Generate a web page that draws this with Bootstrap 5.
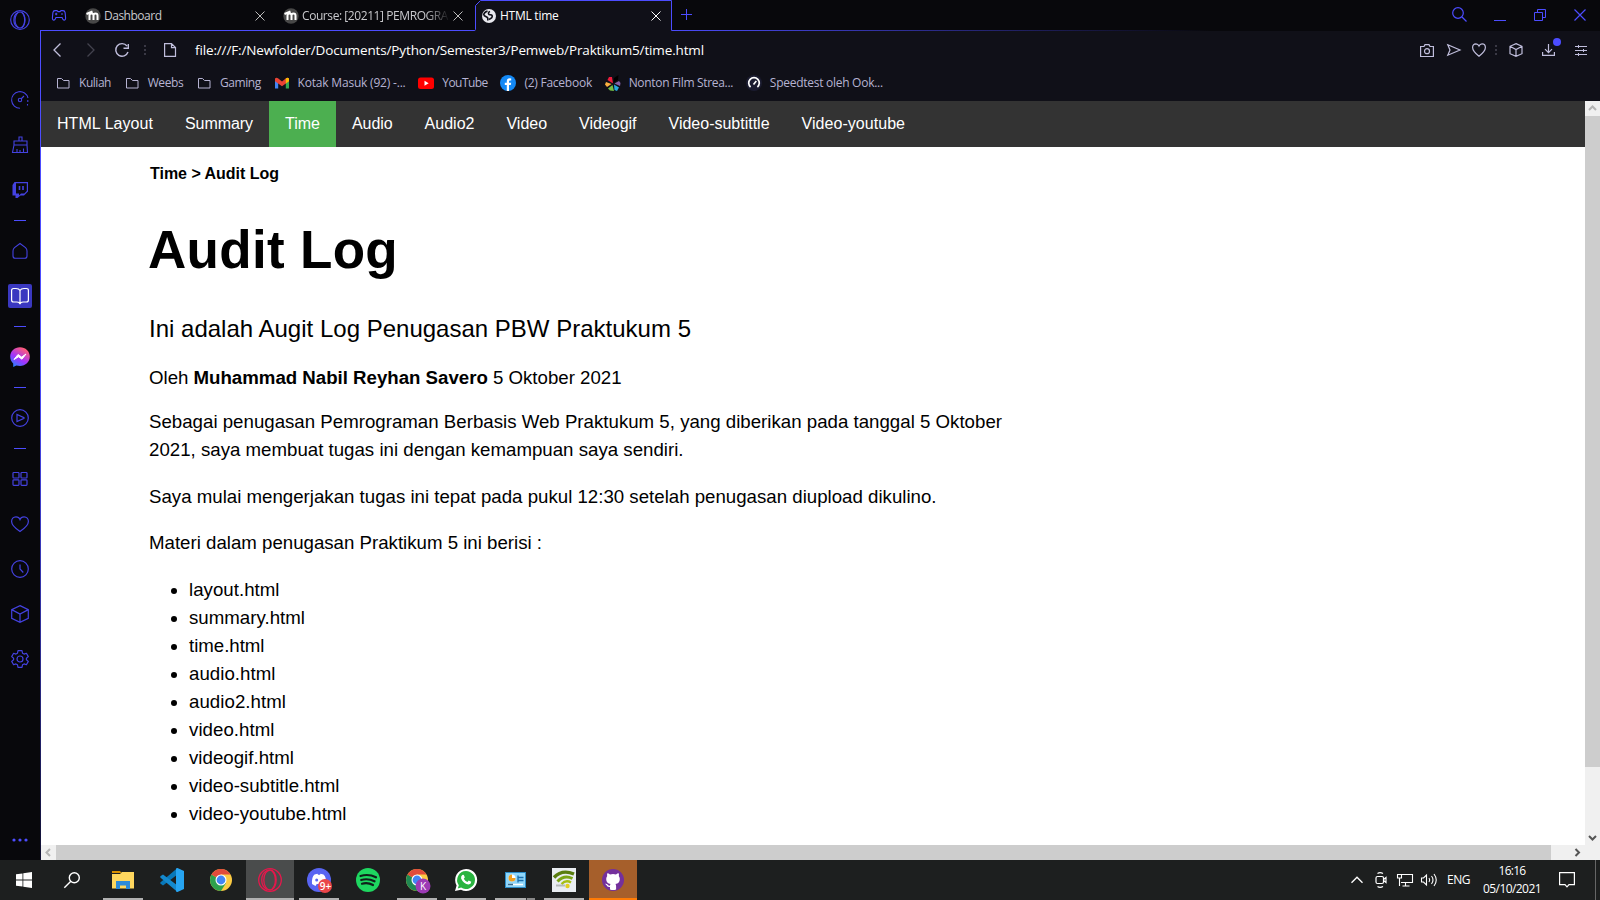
<!DOCTYPE html>
<html lang="id">
<head>
<meta charset="utf-8">
<title>HTML time</title>
<link href="https://cdn.jsdelivr.net/npm/bootstrap@5.3.0/dist/css/bootstrap.min.css" rel="stylesheet">
<style>
:root{--neon:#4c4cff;--chrome:#101018;--dark:#08080c}
body{width:1600px;height:900px;overflow:hidden;background:var(--dark);font-family:"Open Sans","Noto Sans",sans-serif;font-size:12px;line-height:16px;color:#c5c3dc}
svg{display:block;flex:none;overflow:visible}
svg.ln{fill:none;stroke:currentColor}
[data-w]{white-space:nowrap;flex:none}
.browser{height:860px}
.side{width:40px;color:#4442e0}
.side .opera-menu{height:77px;padding-top:10px}
.cell{height:45px;flex:none;padding-right:1px}
.dash{height:16px;flex:none}
.dash i{width:12px;height:1px;background:var(--neon)}
.picked{width:24px;height:24px;background:#3a38c0;border-radius:2px;color:#fff;margin-right:-1px}
.more{margin-top:auto;margin-bottom:18px}
.edge{width:1px;margin-top:30px;background:linear-gradient(var(--neon) 40%,#2d2d90 75%,#101030)}
.tabs{height:31px;background:linear-gradient(90deg,var(--neon) 40%,transparent 75%) 0 30px/100% 1px no-repeat;margin-left:-1px}
.tab{width:198px;height:31px;padding-left:9px}
.tab .fav{width:16px}
.tab .ttl{width:151px;overflow:hidden;margin-left:3px;color:#c8c8cc}
.tab.on{width:197px;position:relative;margin-left:-1px}
.tab.on .ttl{color:#fff;width:151px}
.tab.on .outline{position:absolute;left:0;top:0}
.tab.on>*{position:relative}
.fade-end{-webkit-mask:linear-gradient(90deg,#000 82%,transparent 98%)}
.addr{height:38px;background:var(--chrome);color:#c0bedc}
.addr .url{font-size:13.5px;color:#fff}
.marks{height:32px;background:var(--chrome);padding:0 0 5px 14px;gap:12.7px;color:#b6b3d2}
.marks>span{gap:8px}
.marks .ic{width:16px}
.view{height:759px;background:#fff;color:#000;font-family:"Liberation Sans",Arial,sans-serif}
.doc{height:744px;overflow:hidden}
.topnav{height:46px;background:#333;font-size:16px}
.topnav a{color:#fff;padding:0 16px;height:46px;line-height:45px;text-decoration:none}
.topnav a.active{background:#4caf50;color:#fff}
.article{padding-left:108px;font-size:18.67px;line-height:28px}
.article p{margin:0 0 18.67px}
.article .crumb{font-size:16px;line-height:18px;font-weight:700;margin:18px 0 0 1px}
.article h1{font-size:53px;line-height:60px;font-weight:700;margin:37px 0 0 -1px}
.article .sub{font-size:24px;line-height:28px;margin:35px 0 0}
.article .by{margin:21px 0 16px}
.article ul{padding-left:40px;margin:0}
.vbar,.hbar{background:#f0f0f0;flex:none}
.vbar{width:15px;height:744px}
.hbar{height:15px}
.vbar i,.hbar i{background:#cdcdcd}
.arrow{width:15px;height:15px;flex:none}
.taskbar{height:40px;background:#1d1f1f;color:#fff}
.task{width:49px;height:40px;position:relative}
.task .bar{position:absolute;bottom:0;left:4.5px;width:40px;height:2px;background:#b1b1b1}
.task.big .bar{left:.5px;width:48px}
.task .wash{position:absolute;left:.5px;top:0;width:48px;height:40px}
.task svg{position:relative}
.w48{width:48px}
.clock{width:60px;line-height:18px;font-size:12px}
</style>
</head>
<body>
<div class="browser d-flex">
  <aside class="side d-flex flex-column align-items-center flex-shrink-0">
    <div class="opera-menu"><svg class="ln" width="20" height="20" stroke-width="1.2"><circle cx="10" cy="10" r="9.3"/><ellipse cx="10" cy="10" rx="5" ry="8"/><path d="M8 2.6C2.5 5 2.5 15 8 17.400M12 2.600C15.500 5 15.500 15 12 17.400"/></svg></div>
    <div class="cell d-flex align-items-center"><svg class="ln" width="18" height="18" stroke-width="1.1"><path d="M9 17.200A8.300 8.300 0 1 1 17 7M16.800 9v2M16.500 13v1.500M10 8l3-3"/><circle cx="9" cy="9" r="1.700"/></svg></div>
    <div class="cell d-flex align-items-center"><svg class="ln" width="18" height="18" stroke-width="1.1"><path d="M8 5V1h3v4M3 5h13v4H3zM3 9L1.500 16.500h15L16 9M6 13v3M9 14v2M12.500 12.500v4"/></svg></div>
    <div class="cell d-flex align-items-center"><svg width="18" height="18"><path d="M3.500 1H17v9.500l-4 4H9.500L6.500 17H4.500v-2.500H1.500V4z" fill="currentColor"/><path d="M5 2.200h10.800V10l-2.500 2.600H10l-2 1.800v-1.800H5z" fill="#08080c"/><path d="M8.500 5v4M12 5v4" stroke="currentColor" stroke-width="1.600"/></svg></div>
    <div class="dash d-flex align-items-center"><i></i></div>
    <div class="cell d-flex align-items-center"><svg class="ln" width="18" height="18" stroke-width="1.100"><path d="M9 1.500L14.500 5.600Q16 7 16 9v5q0 2.300-2.300 2.300H4.300Q2 16.300 2 14V9q0-2 1.500-3.400z"/></svg></div>
    <div class="cell d-flex align-items-center"><div class="picked d-flex align-items-center justify-content-center"><svg class="ln" width="18" height="18" stroke-width="1.200"><path d="M9 3.500Q8 1.500 5 1.500H2.500Q.6 1.500.6 3.500V13q0 2 2 2H6q2.500 0 3 2 .5-2 3-2h3.400q2 0 2-2V3.500q0-2-2-2H13Q10 1.500 9 3.500zV17"/></svg></div></div>
    <div class="dash d-flex align-items-center"><i></i></div>
    <div class="cell d-flex align-items-center"><svg width="20" height="20"><defs><linearGradient id="msg" x1="0" y1="1" x2=".6" y2="0"><stop offset="0" stop-color="#0a95ff"/><stop offset=".5" stop-color="#a033ff"/><stop offset="1" stop-color="#ff5c78"/></linearGradient></defs><path d="M10 .2C4.400.2.200 4.200.200 9.600c0 2.900 1.200 5.300 3 7V20l3.200-1.500c1.100.3 2.300.5 3.600.5 5.600 0 9.800-4 9.800-9.400S15.600.2 10 .2z" fill="url(#msg)"/><path d="M4 12.500L8 7.500l3.600 2.600L16 7l-4 5.200L8.500 9.800z" fill="#fff" stroke="#fff"/></svg></div>
    <div class="dash d-flex align-items-center"><i></i></div>
    <div class="cell d-flex align-items-center"><svg class="ln" width="18" height="18" stroke-width="1.200"><circle cx="9" cy="9" r="8.300"/><path d="M6 5.500v7l7-3.200v-.6z"/></svg></div>
    <div class="dash d-flex align-items-center"><i></i></div>
    <div class="cell d-flex align-items-center"><svg class="ln" width="18" height="18" stroke-width="1.200"><rect x="2" y="2.500" width="6" height="5.500" rx=".8"/><rect x="10" y="2.500" width="6" height="5.500" rx=".8"/><rect x="2" y="9.800" width="6" height="5.500" rx=".8"/><rect x="10" y="9.800" width="6" height="5.500" rx=".8"/></svg></div>
    <div class="cell d-flex align-items-center"><svg class="ln" width="18" height="18" stroke-width="1.200"><path d="M9 4.500Q8 1.800 5 1.800C2.300 1.800.6 4 .6 6.500c0 4 3.400 6.600 8.400 10 5-3.400 8.400-6 8.400-10 0-2.500-1.700-4.700-4.400-4.700Q10 1.800 9 4.500z"/></svg></div>
    <div class="cell d-flex align-items-center"><svg class="ln" width="18" height="18" stroke-width="1.200"><circle cx="9" cy="9" r="8.300"/><path d="M9 4.500V9l3.300 3.500"/></svg></div>
    <div class="cell d-flex align-items-center"><svg class="ln" width="18" height="18" stroke-width="1.200"><path d="M9 .6l8.300 4v8.800L9 17.400l-8.300-4V4.600zM.7 4.600L9 9l8.300-4.400M9 9v8.400"/></svg></div>
    <div class="cell d-flex align-items-center"><svg class="ln" width="18" height="18" stroke-width="1.200" stroke-linejoin="round"><circle cx="9" cy="9" r="3"/><path d="M7 .7h4l.5 2.500 1.600.9 2.300-.8 1.900 3.300L15.400 8.200v1.600l1.900 1.600-1.900 3.300-2.300-.8-1.600.9-.5 2.500H7l-.5-2.500-1.600-.9-2.300.8L.7 11.400l1.900-1.600V8.200L.7 6.600l1.900-3.300 2.300.8 1.600-.9z"/></svg></div>
    <div class="more"><svg width="18" height="4" fill="#4c4cff"><circle cx="3" cy="2" r="1.600"/><circle cx="9" cy="2" r="1.600"/><circle cx="15" cy="2" r="1.600"/></svg></div>
  </aside>
  <div class="edge flex-shrink-0"></div>
  <main class="flex-grow-1 d-flex flex-column">
    <header class="tabs d-flex">
      <div class="d-flex align-items-center" style="width:36px;padding-left:12px;color:var(--neon)"><svg class="ln" width="14" height="11" stroke-width="1.100"><path d="M3 .6h2l1 1h2l1-1h2q1.800 0 2.100 2l.5 5q.2 2.500-1.600 2.500-1 0-2-2.600H4Q3 10.100 2 10.100.200 10.100.400 7.600l.5-5Q1.200.600 3 .600z"/><path d="M3 4h2.400M4.200 2.800v2.400M9 4h2"/></svg></div>
      <div class="tab d-flex align-items-center">
        <svg class="fav" width="16" height="16"><circle cx="8" cy="8" r="7.700" fill="#484848"/><path d="M4.500 12V7.500q0-2 2-2t2 2V12M8.500 7.500q0-2 2-2t2 2V12M1.500 6l6-2.500" fill="none" stroke="#fff" stroke-width="2"/></svg>
        <div class="ttl"><span data-w="57.500">Dashboard</span></div>
        <svg class="ln" width="10" height="10" style="color:#bbb"><path d="M.5.500l9 9M9.500.500l-9 9"/></svg>
      </div>
      <div class="tab d-flex align-items-center">
        <svg class="fav" width="16" height="16"><circle cx="8" cy="8" r="7.700" fill="#484848"/><path d="M4.500 12V7.500q0-2 2-2t2 2V12M8.500 7.500q0-2 2-2t2 2V12M1.500 6l6-2.500" fill="none" stroke="#fff" stroke-width="2"/></svg>
        <div class="ttl fade-end"><span data-w="146">Course: [20211] PEMROGRA</span></div>
        <svg class="ln" width="10" height="10" style="color:#bbb"><path d="M.5.500l9 9M9.500.500l-9 9"/></svg>
      </div>
      <div class="tab on d-flex align-items-center">
        <svg class="outline" width="202" height="31"><path d="M0 31V30.500H4.500V5.500L9.500.5H200.500V31z" fill="#101018"/><path d="M0 30.500H3.500L4.500 29.500V5.500L9.500.5H200.500V30.500" fill="none" stroke="#4c4cff"/></svg>
        <svg class="fav" width="16" height="16" style="margin-left:1px"><circle cx="8" cy="8" r="7" fill="#e9e9ef"/><path d="M2.500 7.500Q3 4 6.500 3M9 3.500Q6.500 4.500 8 6.500L10.500 7q1.500 1 0 3L8 11.500M3 7.500l3.500 2 .5 3" fill="none" stroke="#101018" stroke-width="1.600"/></svg>
        <div class="ttl"><span data-w="58.500">HTML time</span></div>
        <svg class="ln" width="10" height="10" style="color:#fff"><path d="M.5.500l9 9M9.500.500l-9 9"/></svg>
      </div>
      <div class="d-flex flex-grow-1 align-items-center pb-1 pe-3" style="color:var(--neon)">
        <svg class="ln" width="11" height="11" style="margin:2px 0 0 13px"><path d="M5.500 0v11M0 5.500h11"/></svg>
        <svg class="ln ms-auto" width="15" height="15" style="margin-top:1px" stroke-width="1.200"><circle cx="6" cy="6" r="5.300"/><path d="M10 10l4.500 4.500"/></svg>
        <svg class="ln" width="12" height="12" style="margin:10px 0 0 27px"><path d="M0 7.500h12"/></svg>
        <svg class="ln" width="12" height="12" style="margin:3px 0 0 28px"><path d="M.5 3.500h8v8h-8zM3.500 3V.5h8v8H9"/></svg>
        <svg class="ln" width="12" height="12" style="margin:3px -2px 0 28px" stroke-width="1.200"><path d="M.5.500l11 11M11.500.500l-11 11"/></svg>
      </div>
    </header>
    <div class="addr d-flex align-items-center">
      <svg class="ln" width="8" height="14" style="margin-left:12px" stroke-width="1.300"><path d="M7.500.500L1 7l6.500 6.500"/></svg>
      <svg class="ln" width="8" height="14" style="margin-left:26px;color:#43424e" stroke-width="1.300"><path d="M.5.500L7 7 .5 13.500"/></svg>
      <svg class="ln" width="14" height="14" style="margin-left:20px" stroke-width="1.400"><path d="M12 3A6.300 6.300 0 1 0 13 9M13.300 1v4.300H8.500"/></svg>
      <svg width="2" height="10" style="margin-left:15px" fill="#3a3945"><path d="M0 0h2v2H0zM0 4h2v2H0zM0 8h2v2H0z"/></svg>
      <svg class="ln" width="12" height="14" style="margin-left:18px" stroke-width="1.200"><path d="M.6.600h6.900l4 4v8.800H.600zM7.500.600v4h4"/></svg>
      <span class="url" style="margin-left:19px" data-w="509">file:///F:/Newfolder/Documents/Python/Semester3/Pemweb/Praktikum5/time.html</span>
      <div class="ms-auto d-flex align-items-center" style="padding-right:13px">
        <svg class="ln" width="14" height="13" stroke-width="1.200"><path d="M.6 2.500H4L5 .6h4l1 1.900h3.400v10H.600z"/><circle cx="7" cy="7.200" r="2.500"/></svg>
        <svg class="ln" width="14" height="12" style="margin-left:13px" stroke-width="1.200"><path d="M.8.800L13 6 .800 11.200 3 6z"/></svg>
        <svg class="ln" width="14" height="14" style="margin-left:11px" stroke-width="1.200"><path d="M7 3Q6 .8 4 .8 .6 1 .6 4.500C.6 8 3.500 10.500 7 13.300c3.500-2.800 6.400-5.300 6.400-8.800C13.400 1 10.500.800 10 .800 8 .800 7 3 7 3z"/></svg>
        <svg width="2" height="10" style="margin-left:9px" fill="#3a3945"><path d="M0 0h2v2H0zM0 4h2v2H0zM0 8h2v2H0z"/></svg>
        <svg class="ln" width="14" height="14" style="margin-left:12px" stroke-width="1.200"><path d="M7 .6l6 2.700v7.400l-6 2.700-6-2.700V3.300zM1 3.300L7 6.500l6-3.200M7 6.500v7"/></svg>
        <svg class="ln" width="13" height="12" style="margin-left:19px" stroke-width="1.200"><path d="M6.500 0v8.500M3 5.200l3.500 3.500L10 5.200M.6 8v3.400h11.800V8"/><circle cx="15" cy="-2" r="4" fill="#4c4cff" stroke="none"/></svg>
        <svg class="ln" width="12" height="11" style="margin-left:20px"><path d="M0 1.500h12M0 5.500h12M0 9.500h12M3.500 0v3M8.500 4v3M3.500 8v3"/></svg>
      </div>
    </div>
    <div class="marks d-flex align-items-center">
      <span class="d-flex align-items-center"><svg class="ln ic" width="16" height="12"><path d="M2.500 1.500h4l2 2h5.500v7.500H2.500z"/></svg><span data-w="32">Kuliah</span></span>
      <span class="d-flex align-items-center"><svg class="ln ic" width="16" height="12"><path d="M2.500 1.500h4l2 2h5.500v7.500H2.500z"/></svg><span data-w="35.500">Weebs</span></span>
      <span class="d-flex align-items-center"><svg class="ln ic" width="16" height="12"><path d="M2.500 1.500h4l2 2h5.500v7.500H2.500z"/></svg><span data-w="41">Gaming</span></span>
      <span class="d-flex align-items-center"><svg class="ic" width="16" height="12"><path d="M1 2v9.500h3.200V5z" fill="#4285f4"/><path d="M15 2v9.500h-3.200V5z" fill="#34a853"/><path d="M1 1.500v2.700L8 9.300l7-5.100V1.500Q13.500 0 12 1.300L8 4.500 4 1.300Q2.500 0 1 1.500z" fill="#ea4335"/><path d="M11.800 1.500v5L15 4.200V1.500Q13.500 0 11.800 1.500z" fill="#fbbc04"/></svg><span data-w="108">Kotak Masuk (92) -...</span></span>
      <span class="d-flex align-items-center"><svg class="ic" width="16" height="12"><rect y=".5" width="16" height="11.500" rx="2.500" fill="red"/><path d="M6.500 3.700v5l4.200-2.500z" fill="#fff"/></svg><span data-w="45.500">YouTube</span></span>
      <span class="d-flex align-items-center"><svg class="ic" width="16" height="16"><circle cx="8" cy="8" r="8" fill="#1489f5"/><path d="M6.800 16V10H4.800V7.700h2V6.200q0-2.900 2.900-2.900l1.500.1v2H10q-1 0-1 1v1.300h2.200L10.800 10H9v6z" fill="#fff"/></svg><span data-w="67.500">(2) Facebook</span></span>
      <span class="d-flex align-items-center"><svg class="ic" width="16" height="16"><path d="M8 8.500L2.500 5 4 2h3z" fill="#ed1c3c"/><path d="M8.500 8L9 3l4.500-3L13 5z" fill="#000"/><path d="M9.500 8.500L14 6l1.500 2-.5 3z" fill="#8560a8"/><path d="M9 9.500l5 3-2 3.500-2.500-1z" fill="#27aae1"/><path d="M7.500 10l1.500 6-4-.5-2-2z" fill="#74bf44"/><path d="M6.500 9L2 12 0 9.500 1 7z" fill="#fbb040"/><circle cx="8" cy="9" r="1" fill="#101018"/></svg><span data-w="104.500">Nonton Film Strea...</span></span>
      <span class="d-flex align-items-center"><svg class="ic" width="16" height="16"><circle cx="8" cy="8" r="8" fill="#1b1c30"/><path d="M4.600 12A5.300 5.300 0 1 1 11.400 12M7.500 9.500l2.800-3.500" fill="none" stroke="#fff" stroke-width="1.700"/></svg><span data-w="113">Speedtest oleh Ook...</span></span>
    </div>
    <section class="view">
      <div class="d-flex">
        <div class="doc flex-grow-1">
          <nav class="topnav d-flex">
            <a href="#" data-w="128">HTML Layout</a><a href="#" data-w="100">Summary</a><a href="#" class="active" data-w="67">Time</a><a href="#" data-w="72.500">Audio</a><a href="#" data-w="82">Audio2</a><a href="#" data-w="72.500">Video</a><a href="#" data-w="89.500">Videogif</a><a href="#" data-w="133">Video-subtittle</a><a href="#" data-w="135.500">Video-youtube</a>
          </nav>
          <article class="article">
            <p class="crumb"><span data-w="129">Time &gt; Audit Log</span></p>
            <h1><span data-w="250">Audit Log</span></h1>
            <p class="sub"><span data-w="542">Ini adalah Augit Log Penugasan PBW Praktukum 5</span></p>
            <p class="by"><span data-w="472.500">Oleh <b>Muhammad Nabil Reyhan Savero</b> 5 Oktober 2021</span></p>
            <p><span data-w="853">Sebagai penugasan Pemrograman Berbasis Web Praktukum 5, yang diberikan pada tanggal 5 Oktober</span><br><span data-w="534.500">2021, saya membuat tugas ini dengan kemampuan saya sendiri.</span></p>
            <p><span data-w="787.500">Saya mulai mengerjakan tugas ini tepat pada pukul 12:30 setelah penugasan diupload dikulino.</span></p>
            <p><span data-w="393">Materi dalam penugasan Praktikum 5 ini berisi :</span></p>
            <ul>
              <li><span data-w="90.500">layout.html</span></li>
              <li><span data-w="116">summary.html</span></li>
              <li><span data-w="75.500">time.html</span></li>
              <li><span data-w="86.500">audio.html</span></li>
              <li><span data-w="97">audio2.html</span></li>
              <li><span data-w="85.500">video.html</span></li>
              <li><span data-w="105">videogif.html</span></li>
              <li><span data-w="150.500">video-subtitle.html</span></li>
              <li><span data-w="157.500">video-youtube.html</span></li>
            </ul>
          </article>
        </div>
        <div class="vbar d-flex flex-column">
          <svg class="arrow ln" style="color:#b5b5b5" stroke-width="2"><path d="M4 9l3.500-3.500L11 9"/></svg>
          <i style="height:651px"></i>
          <svg class="arrow ln mt-auto" style="color:#555" stroke-width="2"><path d="M4 6l3.500 3.500L11 6"/></svg>
        </div>
      </div>
      <div class="hbar d-flex">
        <svg class="arrow ln" style="color:#b5b5b5" stroke-width="2"><path d="M9 4L5.500 7.500 9 11"/></svg>
        <i style="width:1495px"></i>
        <svg class="arrow ln" style="color:#555;margin-left:19px" stroke-width="2"><path d="M5.500 4L9 7.500 5.500 11"/></svg>
      </div>
    </section>
  </main>
</div>
<footer class="taskbar d-flex">
  <div class="w48 d-flex align-items-center justify-content-center"><svg width="16" height="16" fill="#fff"><path d="M0 2.300L6.500 1.400V7.600H0zM7.300 1.300L16 0V7.600H7.300zM0 8.400H6.500V14.600L0 13.700zM7.300 8.400H16V16L7.300 14.700z"/></svg></div>
  <div class="w48 d-flex align-items-center justify-content-center"><svg class="ln" width="16" height="16" stroke-width="1.400"><circle cx="10.300" cy="5.700" r="5"/><path d="M6.800 9.300L.3 15.700"/></svg></div>
  <div style="width:2.500px"></div>
  <div class="task d-flex align-items-center justify-content-center"><svg width="22" height="18"><path d="M0 0h8l1.500 2H0z" fill="#d99000"/><path d="M0 3h8l2-2h12v16.500H0z" fill="#ffd75e"/><path d="M4 10h14v8h-4v-3.500H8V18H4z" fill="#2d8bd8"/></svg><span class="bar"></span></div>
  <div class="task d-flex align-items-center justify-content-center"><svg width="24" height="24"><path d="M17.500 0v6.500L3 17.500.3 15.500v-1z" fill="#0877b8"/><path d="M17.500 24v-6.500L3 6.500.3 8.300v1.200z" fill="#1489ce"/><path d="M17.500 0L24 3v18l-6.500 3-1.500-.5V.5z" fill="#27a5f2"/></svg></div>
  <div class="task d-flex align-items-center justify-content-center"><svg width="22" height="22" viewBox="0 0 22 22"><circle cx="11" cy="11" r="11" fill="#fbcb43"/><path d="M11 11L1.500 5.500A11 11 0 0 0 11 22l5-8z" fill="#2da14d"/><path d="M11 11L1.500 5.500A11 11 0 0 1 20.500 5.500H11z" fill="#e14b3b"/><circle cx="11" cy="11" r="5.500" fill="#fff"/><circle cx="11" cy="11" r="4.400" fill="#4285f4"/></svg></div>
  <div class="task big d-flex align-items-center justify-content-center"><span class="wash" style="background:#4a4c4c"></span><svg class="ln" width="24" height="24" style="color:#e5184c" stroke-width="1.300"><circle cx="12" cy="12" r="11.300"/><ellipse cx="12" cy="12" rx="6.200" ry="10"/><path d="M9 2.500C2 6 2 18 9 21.500M14 3c4.500 4 4.500 14 0 18"/></svg><span class="bar"></span></div>
  <div class="task d-flex align-items-center justify-content-center"><svg width="24" height="24"><circle cx="12" cy="12" r="12" fill="#5865f2"/><path d="M5 16Q4.500 9 7.500 6.500l3-.8.5 1h2l.5-1 3 .8Q19.500 9 19 16l-3.500 2-1.200-2H9.700l-1.200 2z" fill="#fff"/><circle cx="9.700" cy="12" r="1.500" fill="#5865f2"/><circle cx="18" cy="18" r="7" fill="#ea4548"/><text x="12.800" y="21.700" font-size="10" font-weight="600" fill="#fff">9+</text></svg><span class="bar"></span></div>
  <div class="task d-flex align-items-center justify-content-center"><svg width="24" height="24"><circle cx="12" cy="12" r="12" fill="#1ed760"/><path d="M4.500 8Q12.500 5.500 20 9.300M5.200 12Q12 10 18.500 13.300M6 15.700Q12 14.200 17 17" fill="none" stroke="#10201a" stroke-width="2.200" stroke-linecap="round"/></svg></div>
  <div class="task d-flex align-items-center justify-content-center"><svg width="22" height="22"><circle cx="11" cy="11" r="11" fill="#fbcb43"/><path d="M11 11L1.500 5.500A11 11 0 0 0 11 22l5-8z" fill="#208852"/><path d="M11 11L1.500 5.500A11 11 0 0 1 20.500 5.500H11z" fill="#e14b3b"/><circle cx="11" cy="11" r="5.500" fill="#fff"/><circle cx="11" cy="11" r="4.400" fill="#4285f4"/><circle cx="17" cy="17" r="7.500" fill="#9c3ab5"/><text x="14" y="21" font-size="10" fill="#fff">K</text></svg><span class="bar"></span></div>
  <div class="task d-flex align-items-center justify-content-center"><svg width="22" height="22"><path d="M11 0A11 11 0 1 1 6 20.700L0 22l1.600-5.500A11 11 0 0 1 11 0z" fill="#fff"/><path d="M11 2a9 9 0 1 1-4.800 16.600L2.800 19.500l1-3.300A9 9 0 0 1 11 2z" fill="#2ab440"/><path d="M7.300 6q1.400-.8 2 1l.5 1.400-1 1.300q1.200 2.300 3.600 3.200l1.300-1.400 2.600 1.300q-.2 2.600-2.700 2.700-5-.3-7.500-6Q5.700 7 7.300 6z" fill="#fff"/></svg><span class="bar"></span></div>
  <div class="task d-flex align-items-center justify-content-center"><svg width="21" height="16"><rect width="21" height="16" fill="#2c8cc8"/><rect x="1" y="1" width="19" height="14" fill="#8fd6fa"/><circle cx="7" cy="6" r="3.500" fill="#fff"/><path d="M7 6V2.500A3.500 3.500 0 1 0 10.500 6z" fill="#f0a020"/><path d="M13.500 5.500h5M13.500 8.500h5M13 3.500v7" stroke="#1b6fae" stroke-width="1.300"/><path d="M3 12.500h15" stroke="#fff" stroke-width="1.500"/><path d="M3 12.500h5" stroke="#38698a" stroke-width="1.500"/></svg><span class="bar" style="background:linear-gradient(90deg,#b1b1b1 31px,#333 31px 32px,#888 32px)"></span></div>
  <div class="task d-flex align-items-center justify-content-center"><svg width="24" height="24"><rect width="24" height="24" fill="#e9edf2"/><path d="M4 17.500h9" stroke="#b5b8bb" stroke-width="2"/><path d="M2 9.500Q10 1 22 6" fill="none" stroke="#597d10" stroke-width="3.400"/><path d="M5.500 13.500Q12 6.500 20.500 10.500" fill="none" stroke="#7ba516" stroke-width="3"/><path d="M9.500 16Q14 11.500 19 14.500" fill="none" stroke="#a5bf15" stroke-width="2.400"/><circle cx="15.500" cy="18" r="2.200" fill="#e2ce20"/></svg><span class="bar"></span></div>
  <div class="task big d-flex align-items-center justify-content-center"><span class="wash" style="background:#a65f2b"></span><svg width="22" height="22"><circle cx="11" cy="11" r="11" fill="#74309c"/><path d="M8 20.500V18q-2.600.6-3.600-2L3 14.800q2-.3 3 1.200.8 1 2 .4.100-.8.600-1.300Q4.200 14.600 4.200 10q0-1.700 1-3-.4-1.300.1-2.700 1.300 0 2.700 1.100 3-.8 6 0 1.400-1.100 2.700-1.100.5 1.400.1 2.700 1 1.300 1 3 0 4.600-4.400 5.100.7.700.7 2v3.400q-3 1.200-6.100 0z" fill="#fff"/></svg><span class="bar" style="background:#ff7b05"></span></div>
  <div class="ms-auto d-flex align-items-center">
    <svg class="ln" width="12" height="8" stroke-width="1.300"><path d="M.5 6.800L6 1.200l5.500 5.600"/></svg>
    <svg class="ln" width="12" height="16" style="margin-left:12px" stroke-width="1.200"><rect x="1" y="4.500" width="7.500" height="7" rx="1.500"/><path d="M8.500 7.500l2.500-2v5l-2.500-2M2.500 1.500Q5-.3 8 1.500M2.500 14.500q2.500 1.800 5.500 0"/></svg>
    <svg class="ln" width="16" height="14" style="margin-left:10px" stroke-width="1.100"><path d="M5 1.500h10.500v8H4M.5 1.500h4v3.500h-4zM2.500 5v8M8.500 9.500v3M5.500 13h7"/></svg>
    <svg class="ln" width="16" height="14" style="margin-left:8px" stroke-width="1.100"><path d="M.5 5h2L5.500 2v10L2.500 9h-2zM8 5q1.500 2 0 4M10.500 3q3 4 0 8M13 1q4.500 6 0 12"/></svg>
    <span style="margin-left:10px" data-w="23">ENG</span>
    <div class="clock text-center" style="margin-left:12px"><span data-w="27">16:16</span><br><span data-w="58">05/10/2021</span></div>
    <svg class="ln" width="16" height="16" style="margin:0 20px 0 17px" stroke-width="1.200"><path d="M.6.600h14.800v12H10l-2 2.200-2-2.200H.600z"/></svg>
    <div style="width:1px;height:40px;margin-right:4px;background:#666"></div>
  </div>
</footer>
<script src="https://cdn.jsdelivr.net/npm/bootstrap@5.3.0/dist/js/bootstrap.bundle.min.js"></script>
<script>
// Track each label so that it fills the width given in data-w.
document.querySelectorAll('[data-w]').forEach(function (el) {
  var extra = Number(el.dataset.w) - el.getBoundingClientRect().width;
  el.style.letterSpacing = (extra / el.textContent.length).toFixed(4) + 'px';
});
</script>
</body>
</html>
